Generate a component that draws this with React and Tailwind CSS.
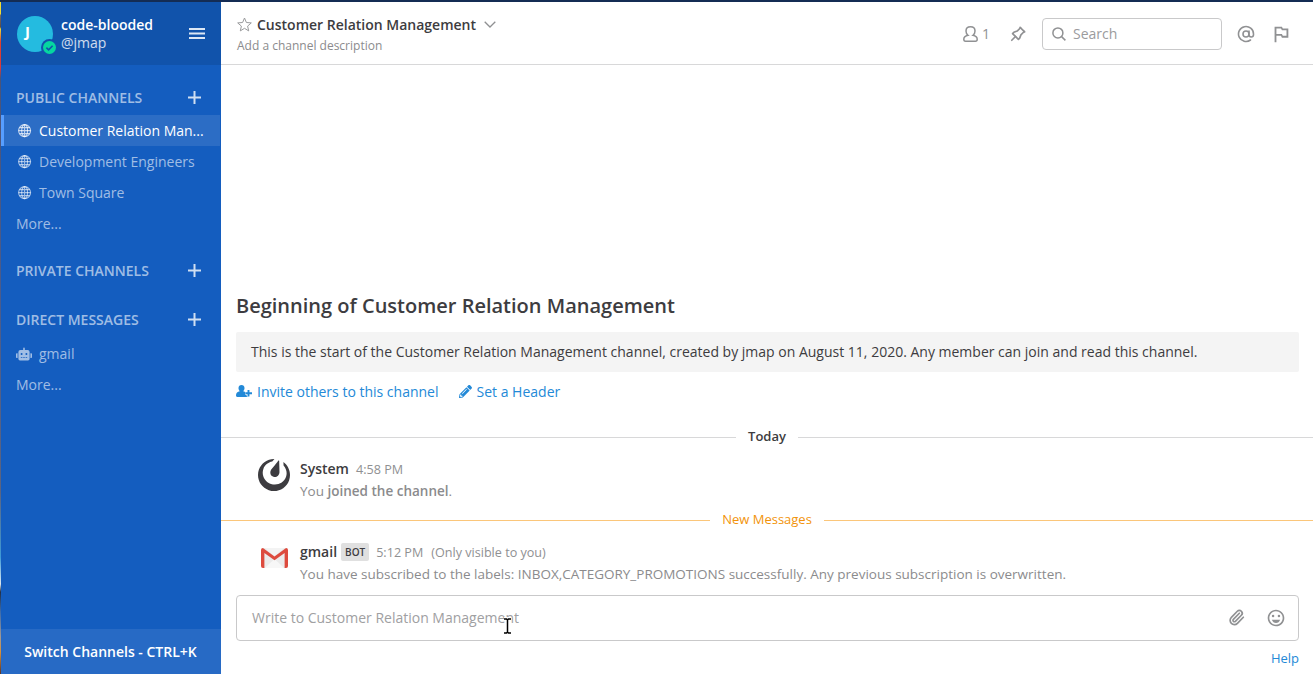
import React from 'react';
import { FaRobot, FaUserPlus, FaPencilAlt } from 'react-icons/fa';
import { SiMattermost } from 'react-icons/si';
import { MdOutlinedFlag, MdOutlineEmojiEmotions } from 'react-icons/md';
import { TbPin } from 'react-icons/tb';
import { AtSign, Paperclip } from 'lucide-react';

function Globe() {
  return (
    <svg className="size-[14px] shrink-0" viewBox="0 0 14 14" fill="none" stroke="currentColor" strokeWidth="1.1">
      <circle cx="6.600" cy="6.600" r="6" />
      <ellipse cx="6.600" cy="6.600" rx="2.900" ry="6" />
      <path d="M6.600.6v12M.6 6.600h12M1.500 3.600h10.200M1.500 9.600h10.200" />
    </svg>
  );
}

function Category({ children, className = '' }) {
  return (
    <div className={`flex h-[34px] items-center justify-between pl-[15px] pr-[20px] ${className}`}>
      <span className="font-semibold text-white/60">{children}</span>
      <svg className="size-[13px]" viewBox="0 0 13 13" fill="none" stroke="#d0dff2" strokeWidth="2">
        <path d="M6.500 0v13M0 6.500h13" />
      </svg>
    </div>
  );
}

function Channel({ icon, label, active }) {
  return (
    <div
      className={`flex h-[31px] items-center gap-[7px] border-l-[3px] pl-[14px] ${
        active ? 'mr-px border-[#579eff] bg-[#2c6dc5] text-white' : 'border-transparent text-white/60'
      }`}
    >
      <span className={`flex w-[14px] justify-center ${active ? 'text-white/70' : ''}`}>{icon}</span>
      <span>{label}</span>
    </div>
  );
}

function More() {
  return <div className="flex h-[31px] items-center pl-[15px] text-white/60">More...</div>;
}

function Sidebar() {
  return (
    <aside className="flex w-[220px] shrink-0 flex-col bg-[#145dbf]">
      <div className="flex h-[63px] shrink-0 items-center bg-[#1153ab] pl-[16px] pr-[16px]">
        <div className="relative flex size-[36px] shrink-0 items-center justify-center rounded-full bg-[#24bbe0] pr-[15px] pb-[5px] text-[15px] font-bold text-white">
          J
          <span className="absolute -right-[5px] -bottom-[4px] size-[17px] rounded-full bg-[#1153ab] p-[2px]">
            <svg className="size-[13px]" viewBox="0 0 13 13">
              <circle cx="6.5" cy="6.5" r="6.5" fill="#06d6a0" />
              <path d="M3.4 6.6l2.2 2.2 4-4" fill="none" stroke="#1153ab" strokeWidth="1.6" />
            </svg>
          </span>
        </div>
        <div className="ml-[8px] grow leading-[18px]">
          <div className="font-semibold text-white">code-blooded</div>
          <div className="text-white/80">@jmap</div>
        </div>
        <svg className="h-[11px] w-[16px]" viewBox="0 0 16 11" fill="#dce7f5">
          <path d="M0 0h16v2H0zM0 4.500h16v2H0zM0 9h16v2H0z" />
        </svg>
      </div>
      <nav className="flex grow flex-col pt-[15px]">
        <Category>PUBLIC CHANNELS</Category>
        <div className="h-px" />
        <Channel active icon={<Globe />} label="Customer Relation Man..." />
        <Channel icon={<Globe />} label="Development Engineers" />
        <Channel icon={<Globe />} label="Town Square" />
        <More />
        <Category className="mt-[14px]">PRIVATE CHANNELS</Category>
        <Category className="mt-[15px]">DIRECT MESSAGES</Category>
        <div className="h-[2px]" />
        <Channel icon={<FaRobot className="mr-[3px] h-[14px] w-[16px] shrink-0" />} label="gmail" />
        <More />
      </nav>
      <div className="flex h-[45px] items-center justify-center bg-[#276ac5] pr-[1px] font-semibold text-white">
        Switch Channels - CTRL+K
      </div>
    </aside>
  );
}

function Header() {
  return (
    <header className="flex h-[63px] shrink-0 items-center border-b border-[#d8d8d9] pl-[16px] pr-[26px] text-[#909193]">
      <div className="grow pt-[4px]">
        <div className="flex h-[20px] items-center">
          <svg className="mr-[5px] size-[15px]" viewBox="0 0 15 15" fill="none" stroke="#999a9c" strokeWidth="1">
            <path d="M7.5 1l1.9 4.5 4.9.4-3.7 3.2 1.1 4.8-4.2-2.6-4.2 2.6 1.1-4.8L.7 5.9l4.9-.4z" />
          </svg>
          <h1 className="font-semibold text-[#3d3c40]">Customer Relation Management</h1>
          <svg className="ml-[8px] h-[7px] w-[12px]" viewBox="0 0 12 7" fill="none" stroke="#8f9092" strokeWidth="1.3">
            <path d="M.7.8L6 6 11.3.8" />
          </svg>
        </div>
        <div className="h-[21px] text-[12px] leading-[21px] text-[#8b8b8d]">Add a channel description</div>
      </div>
      <div className="flex items-center pt-px">
        <svg className="h-[16px] w-[15px]" viewBox="0 0 15 16" fill="none" stroke="currentColor" strokeWidth="1.5">
          <path d="M5 9.3C3.7 8.4 3 6.800 3 5c0-2.600 1.800-4.200 4.500-4.200S12 2.400 12 5c0 1.800-.7 3.400-2 4.300 2.500.6 4.200 1.600 4.200 3.900 0 1.300-.5 2-1.700 2h-10c-1.200 0-1.700-.7-1.700-2 0-2.300 1.700-3.300 4.200-3.900z" />
        </svg>
        <span className="ml-[4px]">1</span>
        <TbPin className="ml-[18px] size-[20px]" strokeWidth={2} />
        <div className="ml-[14px] flex h-[32px] w-[180px] items-center rounded-[4px] border border-[#c9c9ca] pl-[9px]">
          <svg className="size-[14px]" viewBox="0 0 14 14" fill="none" stroke="currentColor" strokeWidth="1.500">
            <circle cx="5.900" cy="5.900" r="5" />
            <path d="M9.600 9.600l3.800 3.800" />
          </svg>
          <span className="ml-[7px] -mt-px text-[#9b9b9d]">Search</span>
        </div>
        <AtSign className="ml-[15px] size-[18px]" strokeWidth={2.100} />
        <MdOutlinedFlag className="ml-[15px] size-[22px] -mr-[5px]" />
      </div>
    </header>
  );
}

function GmailLogo() {
  return (
    <svg className="h-[20px] w-[27px]" viewBox="0 0 28 20" preserveAspectRatio="none">
      <path d="M2 0h24v20H2z" fill="#ebebeb" />
      <path d="M4 20l10-9 10 9z" fill="#f7f7f7" />
      <path d="M4 0h20L14 8z" fill="#f3f3f3" />
      <path d="M0 2Q0 0 2 0L14 8.500 26 0q2 0 2 2v16q0 2-2 2h-1.500V5L14 12.300 3.500 5v15H2q-2 0-2-2z" fill="#dd4b3e" />
    </svg>
  );
}

function Separator({ label, lineClass, textClass, className }) {
  return (
    <div className={`flex h-[20px] shrink-0 items-center ${className}`}>
      <div className={`h-px grow ${lineClass}`} />
      <span className={`px-[12.500px] text-[13px] ${textClass}`}>{label}</span>
      <div className={`h-px grow ${lineClass}`} />
    </div>
  );
}

function Post({ avatar, name, children, body }) {
  return (
    <div className="flex h-[44px] shrink-0 pl-[37px]">
      <div className="flex w-[32px] shrink-0 justify-center">{avatar}</div>
      <div className="ml-[10px]">
        <div className="flex h-[22px] items-center text-[12.600px] text-[#8f9092]">
          <span className="mb-[2px] text-[14px] font-semibold text-[#3d3c40]">{name}</span>
          {children}
        </div>
        <div className="h-[22px] text-[13.500px] leading-[22px] text-[#8b8b8d]">{body}</div>
      </div>
    </div>
  );
}

function Messages() {
  return (
    <section className="flex grow flex-col pt-[226px]">
      <h2 className="ml-[15px] h-[30px] text-[20px] leading-[30px] font-semibold text-[#3d3c40]">
        Beginning of Customer Relation Management
      </h2>
      <div className="mx-[15px] mr-[14px] mt-[11px] flex h-[40px] items-center rounded-[2px] bg-[#f4f4f4] px-[15px] pb-[2px] text-[#3d3c40]">
        This is the start of the Customer Relation Management channel, created by jmap on August 11, 2020. Any member can join and read this channel.
      </div>
      <div className="ml-[15px] mt-[8px] flex h-[22px] items-center text-[#2389d7]">
        <svg className="h-[12px] w-[16px]" viewBox="0 0 16 12" fill="currentColor">
          <path d="M5.500 0C7.300 0 8.500 1.300 8.500 3.100c0 1.300-.5 2.500-1.300 3.100 1 .3 2 .5 2.700 1.100v2.500h1.500V12H1.400C.4 12 0 11.400 0 10.300c0-2.500 1.500-3.500 3.800-4.100-.8-.6-1.300-1.800-1.300-3.100C2.500 1.300 3.700 0 5.500 0z" />
          <path d="M12.300 4.800v6.400M9.200 8h6.400" fill="none" stroke="#fff" strokeWidth="3.400" />
          <path d="M12.500 5v6.500M9.400 8.200H16" fill="none" stroke="currentColor" strokeWidth="1.900" />
        </svg>
        <span className="ml-[5px]">Invite others to this channel</span>
        <FaPencilAlt className="ml-[20px] size-[13px]" />
        <span className="ml-[5px]">Set a Header</span>
      </div>
      <Separator label="Today" className="mt-[25px]" lineClass="bg-[#d8d8d9]" textClass="font-semibold text-[#3d3c40]" />
      <div className="mt-[11px]">
        <Post
          avatar={<SiMattermost className="mt-[1px] size-[32px] text-[#3d3c40]" />}
          name="System"
          body={<>You <b className="font-semibold">joined the channel</b>.</>}
        >
          <span className="ml-[7px] pt-[2px]">4:58 PM</span>
        </Post>
      </div>
      <Separator label="New Messages" className="mt-[8px]" lineClass="bg-[#fbc67a]" textClass="text-[#f2930a]" />
      <div className="mt-[11px]">
        <Post
          avatar={<div className="mt-[7px] ml-[1px]"><GmailLogo /></div>}
          name="gmail"
          body="You have subscribed to the labels: INBOX,CATEGORY_PROMOTIONS successfully. Any previous subscription is overwritten."
        >
          <span className="ml-[4px] flex h-[18px] items-center rounded-[2px] bg-[#e0e0e0] px-[4px] text-[10px] font-semibold text-[#3d3c40]">BOT</span>
          <span className="ml-[7px] pt-[2px]">5:12 PM</span>
          <span className="ml-[8px] pt-[2px]">(Only visible to you)</span>
        </Post>
      </div>
    </section>
  );
}

function Composer() {
  return (
    <footer className="h-[79px] shrink-0 pl-[15px] pr-[14px]">
      <div className="relative flex h-[46px] items-center rounded-[4px] border border-[#c9c9ca] pl-[15px] pr-[13px] text-[#909193]">
        <span className="grow pb-[2px] text-[#a0a0a2]">Write to Customer Relation Management</span>
        <Paperclip className="mb-px size-[17px]" strokeWidth={2.400} />
        <MdOutlineEmojiEmotions className="mb-px ml-[21px] size-[20px] -mr-px" />
        <svg className="absolute top-[21px] left-[266px] h-[18px] w-[9px]" viewBox="0 0 9 18" fill="none">
          <path d="M1 2h7M4.500 2v14M1 16h7" stroke="#fff" strokeWidth="4" />
          <path d="M1 2h2.500l1 1 1-1H8M4.500 3v12M1 16h2.500l1-1 1 1H8" stroke="#000" strokeWidth="1.500" />
        </svg>
      </div>
      <div className="flex h-[33px] items-center justify-end pt-[2px] text-[13px] text-[#2389d7]">Help</div>
    </footer>
  );
}

export default function App() {
  return (
    <div className="flex h-[674px] w-[1313px] flex-col overflow-hidden bg-white font-['Open_Sans',sans-serif] text-[14px]">
      <div className="h-[2px] shrink-0 bg-[#142c54]" />
      <div className="flex min-h-0 grow">
        <div className="w-px shrink-0 bg-[linear-gradient(#f0dc32_0px,#f0dc32_12px,#756a60_13px,#5c4c46_25px,#e8d83c_27px,#e0402c_40px,#d83a3a_66px,#4c5478_76px,#4b5c8c_300px,#5c6480_490px,#3d9ad8_555px,#dce8f0_582px,#223048_590px,#3c6cac_610px,#a09894_635px,#d89038_650px,#5a342c_672px)]" />
        <Sidebar />
        <main className="flex min-w-0 grow flex-col">
          <Header />
          <Messages />
          <Composer />
        </main>
      </div>
    </div>
  );
}
